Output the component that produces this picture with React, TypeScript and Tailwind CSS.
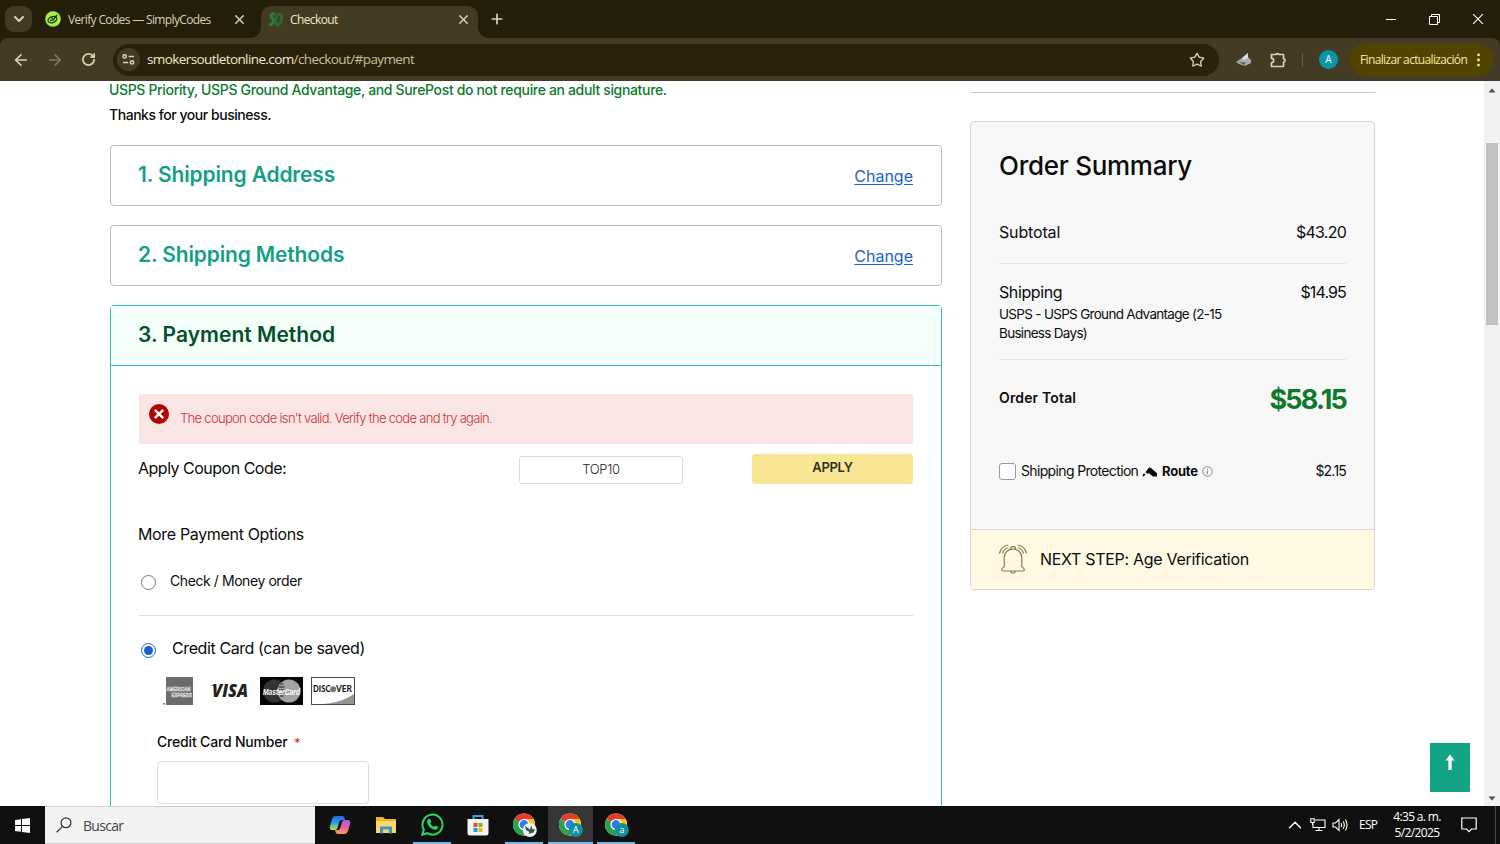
import type { ReactNode } from 'react';
import {
  ArrowLeft,
  ArrowRight,
  ChevronDown,
  ChevronUp,
  Plus,
  RotateCw,
  Star,
  X
} from 'lucide-react';

function ChromeLogo({ badge, badgeColor }: { badge?: string; badgeColor: string }) {
  return (
    <svg width="24" height="26" viewBox="0 0 24 26" className="ml-[2px] mt-[3px]">
      <circle cx="11" cy="11.5" r="11" fill="#fff" />
      <path d="M11 11.5 L1.47 6 A11 11 0 0 1 20.53 6 Z" fill="#e33b2e" />
      <path d="M11 11.5 L20.53 6 A11 11 0 0 1 11 22.5 Z" fill="#fbc116" />
      <path d="M11 11.5 L11 22.5 A11 11 0 0 1 1.47 6 Z" fill="#2da24c" />
      <path d="M11 6 H20.53 L16 14.5 L11 11.5 Z" fill="#fbc116" />
      <circle cx="11" cy="11.5" r="5.6" fill="#fff" />
      <circle cx="11" cy="11.5" r="4.4" fill="#2f7de9" />
      <circle cx="16.8" cy="17" r="7" fill={badgeColor} />
      {badge ? (
        <text x="16.8" y="20.4" textAnchor="middle" fontSize="9.5" fill="#fff" fontFamily="Open Sans, sans-serif">
          {badge}
        </text>
      ) : (
        <path d="M12 13 L17 16.5 L18.5 12.5 L19.5 16.5 L22 16 L20.5 19.5 L15.5 21 L16.5 19 L13 17 Z" fill="#2b5546" />
      )}
    </svg>
  );
}

function BrowserTabs() {
  return (
    <div className="flex h-[38px] items-start bg-[#241e0a] text-[#d9d0b0]">
      <div className="ml-[5px] mt-[6px] flex h-[26px] w-[27px] items-center justify-center rounded-[9px] bg-[#433b24]">
        <ChevronDown size={16} strokeWidth={3} />
      </div>

      <div className="ml-[13px] mt-[6px] flex h-[26px] w-[201px] items-center">
        <svg width="16" height="16" viewBox="0 0 16 16" className="shrink-0">
          <circle cx="8" cy="8" r="7.8" fill="#a5f04b" />
          <ellipse cx="7.4" cy="8.6" rx="4.6" ry="2.9" transform="rotate(-22 7.4 8.6)" fill="none" stroke="#1c3a12" strokeWidth="1.3" />
          <path d="M5 9.5 L8.3 9 L12 4 M8 7 L6.5 7.4" fill="none" stroke="#1c3a12" strokeWidth="1.3" />
        </svg>
        <span className="ml-[7px] w-[165px] shrink-0 whitespace-nowrap pt-px text-[12px] tracking-[-0.65px]">Verify Codes — SimplyCodes</span>
        <X size={15} strokeWidth={2.4} className="-ml-px shrink-0" />
      </div>

      <div className="relative ml-[15px] mt-[6px] flex h-[32px] w-[217px] items-start rounded-t-[10px] bg-[#433b24]">
        <span className="absolute -left-[10px] bottom-0 size-[10px] bg-[radial-gradient(circle_at_0_0,transparent_9.5px,#433b24_10px)]" />
        <span className="absolute -right-[10px] bottom-0 size-[10px] bg-[radial-gradient(circle_at_100%_0,transparent_9.5px,#433b24_10px)]" />
        <div className="flex h-[26px] items-center">
          <svg width="16" height="15" viewBox="0 0 16 15" className="ml-[7px]">
            <path d="M7 2.5 C4 1 2 3 4 6 C7 9 5 13 1 12.5" fill="none" stroke="#2f7a3c" strokeWidth="3.2" />
            <path d="M12 2 C8 1 6 13 9.5 13 C13.5 12.5 15 3 12 2 Z" fill="none" stroke="#2a6a35" strokeWidth="3" />
          </svg>
          <span className="ml-[6px] w-[166px] pt-px text-[12px] tracking-[-0.6px] text-[#f0e6c4]">Checkout</span>
          <X size={15} strokeWidth={2.4} />
        </div>
      </div>

      <Plus size={16} strokeWidth={2.6} className="ml-[11px] mt-[11px]" />

      <div className="ml-auto mr-[17px] flex h-[38px] items-center text-white">
        <span className="mr-[33px] h-px w-[10px] bg-white" />
        <svg width="11" height="11" viewBox="0 0 11 11" className="mr-[33px]" fill="none" stroke="currentColor">
          <path d="M0.5 2.5 H8.5 V10.5 H0.5 Z M2.5 2.5 V0.5 H10.5 V8.5 H8.5" />
        </svg>
        <svg width="10" height="10" viewBox="0 0 10 10" stroke="currentColor" strokeWidth="1.1">
          <path d="M0 0 L10 10 M10 0 L0 10" />
        </svg>
      </div>
    </div>
  );
}

function Toolbar() {
  return (
    <div className="h-[43px] bg-[#241e0a]">
      <div className="flex h-[43px] items-center rounded-t-[8px] bg-[#433b24] text-[#dcd2b0]">
        <ArrowLeft size={18} strokeWidth={2.3} className="ml-[12px]" />
        <ArrowRight size={18} strokeWidth={2.3} className="ml-[16px] text-[#857a59]" />
        <RotateCw size={15} strokeWidth={2.8} className="ml-[17px]" />
        <div className="ml-[17px] flex h-[32px] w-[1106px] items-center rounded-full bg-[#2b220b]">
          <span className="ml-[4px] flex size-[23px] items-center justify-center rounded-full bg-[#433b24]">
            <svg width="13" height="11" viewBox="0 0 13 11" fill="none" stroke="currentColor" strokeWidth="1.5">
              <circle cx="2.6" cy="2.4" r="1.7" />
              <path d="M6.5 2.4 H12 M1 8.4 H6.2" />
              <circle cx="10" cy="8.4" r="1.7" />
            </svg>
          </span>
          <span className="ml-[7px] whitespace-nowrap text-[13.5px] tracking-[-0.6px] text-[#f2e9ca]">
            smokersoutletonline.com<span className="text-[#c9bf9c]">/checkout/#payment</span>
          </span>
          <Star size={16} strokeWidth={2} className="ml-auto mr-[14px]" />
        </div>
        <svg width="16" height="14" viewBox="0 0 16 14" className="ml-[17px]">
          <path d="M0 9 L6 5 L12 0 L12 4 L15 7 L15 10 L9 13 L3 11 Z" fill="#a9a8ad" />
          <path d="M6 5 L12 0 L12 5 L8 7 Z" fill="#d9d9de" />
          <path d="M3 9 L10 9.5 L8 12 Z" fill="#5f5e64" />
        </svg>
        <svg width="17" height="16" viewBox="0 0 17 16" className="ml-[18px]" fill="none" stroke="currentColor" strokeWidth="1.7" strokeLinejoin="round">
          <path d="M1.5 2.5 H6 A1.7 1.7 0 0 1 9 2.5 H13.5 V6.8 A1.6 1.6 0 0 1 13.5 10 V14.5 H1.5 V10.8 A2.2 2.2 0 0 0 1.5 6.4 Z" />
        </svg>
        <span className="ml-[15px] h-[14px] w-px bg-[#6b6142]" />
        <span className="ml-[16px] flex size-[19px] items-center justify-center rounded-full bg-[#0997a7] text-[10px] text-white">A</span>
        <div className="ml-[11px] flex h-[32px] w-[145px] items-center rounded-full bg-[#534300] text-[12px] text-[#f7e6a5]">
          <span className="ml-[11px] w-[117px] whitespace-nowrap tracking-[-0.65px]">Finalizar actualización</span>
          <svg width="3" height="14" viewBox="0 0 3 14" fill="currentColor">
            <circle cx="1.5" cy="1.9" r="1.4" />
            <circle cx="1.5" cy="7" r="1.4" />
            <circle cx="1.5" cy="12.1" r="1.4" />
          </svg>
        </div>
      </div>
    </div>
  );
}

function Step({ title }: { title: string }) {
  return (
    <div className="mb-[19px] flex h-[61px] items-center justify-between rounded-[4px] border border-[#bcbcbc] pl-[27px] pr-[28px]">
      <h2 className="pb-px text-[21px] font-semibold tracking-[-0.15px] text-[#14a085]">{title}</h2>
      <a href="#" className="text-[16px] text-[#1b66c0] underline underline-offset-2">Change</a>
    </div>
  );
}

function Radio({ checked }: { checked?: boolean }) {
  return checked ? (
    <span className="flex size-[15px] items-center justify-center rounded-full border border-[#1565d8]">
      <span className="size-[9px] rounded-full bg-[#1262cf]" />
    </span>
  ) : (
    <span className="size-[15px] rounded-full border border-[#767676]" />
  );
}

function CardLogos() {
  return (
    <div className="mt-[17px] flex h-[28px] items-center pl-[23px]">
      <svg width="32" height="28" viewBox="0 0 32 28">
        <rect x="4" width="27" height="28" fill="#6b6b6b" />
        <rect x="1" y="26" width="2" height="1.5" fill="#888" />
        <g fill="#7d7d7d" stroke="#e4e4e4" strokeWidth="0.5" fontFamily="Liberation Sans, sans-serif" fontSize="6" fontWeight="700">
          <text transform="translate(4.5 14.4) scale(0.74 1)">AMERICAN</text>
          <text transform="translate(9.5 20.2) scale(0.72 1)">EXPRESS</text>
        </g>
      </svg>
      <svg width="40" height="28" viewBox="0 0 40 28" className="ml-[16px]">
        <path d="M0.5 8 H5 L7.5 14 L5 10 Z" fill="#888" />
        <text x="2" y="20.3" textLength="36" lengthAdjust="spacingAndGlyphs" fontFamily="Open Sans, sans-serif" fontStyle="italic" fontWeight="800" fontSize="17" fill="#222">VISA</text>
      </svg>
      <svg width="43" height="28" viewBox="0 0 43 28" className="ml-[10px]">
        <rect width="43" height="28" fill="#050505" />
        <circle cx="14.5" cy="14" r="11.5" fill="#343434" />
        <circle cx="29" cy="14" r="11.5" fill="#a3a3a3" />
        <path d="M20 7 H23.5 M19 10 H24.5 M19 13 H24.5 M19 16 H24.5 M20 19 H23.5" stroke="#4a4a4a" strokeWidth="1.4" />
        <text transform="translate(3 18) scale(0.75 1)" fontFamily="Liberation Sans, sans-serif" fontStyle="italic" fontWeight="700" fontSize="9" fill="#fff">MasterCard</text>
      </svg>
      <svg width="44" height="28" viewBox="0 0 44 28" className="ml-[8px]">
        <rect x="0.5" y="0.5" width="43" height="27" fill="#fff" stroke="#4a4a4a" />
        <path d="M12 27 C26 26 36 22 43 17 V27 Z" fill="#949494" />
        <g fontFamily="Lato, sans-serif" fontWeight="900" fontSize="8.4" fill="#1d1d1d">
          <text x="2" y="15.3" textLength="17.5" lengthAdjust="spacingAndGlyphs">DISC</text>
          <text x="25" y="15.3" textLength="16" lengthAdjust="spacingAndGlyphs">VER</text>
        </g>
        <circle cx="22.2" cy="12.3" r="3" fill="#777" />
      </svg>
    </div>
  );
}

function CheckoutSteps() {
  return (
    <div className="w-[832px] shrink-0">
      <div className="-ml-px -mt-[4px] mb-[18px] text-[14px] font-medium leading-[25px]">
        <p className="whitespace-nowrap tracking-[-0.34px] text-[#0b7a2c]">
          USPS Priority, USPS Ground Advantage, and SurePost do not require an adult signature.
        </p>
        <p className="whitespace-nowrap tracking-[-0.46px]">Thanks for your business.</p>
      </div>

      <Step title="1. Shipping Address" />
      <Step title="2. Shipping Methods" />

      <div className="h-[560px] rounded-t-[4px] border border-[#2fc4ab]">
        <div className="flex h-[60px] items-center border-b border-[#2fc4ab] bg-[#f4fffa] pl-[27px] pb-[2px]">
          <h2 className="text-[21px] font-semibold tracking-[0.02px] text-[#055029]">3. Payment Method</h2>
        </div>

        <div className="px-[28px] pt-[28px]">
          <div className="flex h-[50px] bg-[#f9e5e4]">
            <svg width="20" height="20" viewBox="0 0 20 20" className="ml-[10px] mt-[10px]">
              <circle cx="10" cy="10" r="10" fill="#b30000" />
              <path d="M5.8 5.8 L14.2 14.2 M14.2 5.8 L5.8 14.2" stroke="#fff" strokeWidth="2.4" />
            </svg>
            <p className="ml-[11px] text-[13px] font-light leading-[49px] tracking-[-0.69px] text-[#cf2f38]">
              The coupon code isn't valid. Verify the code and try again.
            </p>
          </div>

          <div className="flex h-[40px] items-end">
            <span className="-ml-px w-[381px] pb-[4px] text-[16px] leading-[24px] tracking-[-0.5px]">Apply Coupon Code:</span>
            <span className="flex h-[28px] w-[164px] items-center justify-center rounded-[3px] border border-[#dcdcdc] text-[13px] font-light tracking-[-0.3px] text-[#222]">TOP10</span>
            <button className="ml-auto h-[30px] w-[161px] rounded-[3px] bg-[#f8e694] pb-[2px] text-[13px] font-semibold tracking-[-0.3px] text-[#2b3226]">APPLY</button>
          </div>

          <h3 className="-ml-px mt-[38px] text-[16px] leading-[24px] tracking-[-0.34px]">More Payment Options</h3>

          <div className="mt-[25px] flex h-[20px] items-center pl-[2px]">
            <span className="flex pt-[2px]"><Radio /></span>
            <span className="ml-[14px] text-[14px] leading-[20px] tracking-[-0.42px]">Check / Money order</span>
          </div>
          <div className="mt-[24px] h-px bg-[#dfdfdf]" />

          <div className="mt-[20px] flex h-[24px] items-center pl-[2px]">
            <span className="flex pt-[4px]"><Radio checked /></span>
            <span className="ml-[16px] text-[16px] tracking-[-0.4px]">Credit Card (can be saved)</span>
          </div>
          <CardLogos />

          <div className="pl-[18px] pt-[27px]">
            <label className="block text-[14px] font-medium leading-[20px] tracking-[-0.18px]">
              Credit Card Number <span className="ml-[3px] text-[12px] text-[#e02b27]">*</span>
            </label>
            <div className="mt-[8px] h-[43px] w-[212px] rounded-[4px] border border-[#dcdcdc]" />
          </div>
        </div>
      </div>
    </div>
  );
}

function OrderSummary() {
  return (
    <div className="ml-[28px] w-[405px] shrink-0">
      <div className="mt-[11px] h-px bg-[#cdc9c4]" />
      <div className="mt-[28px] rounded-[4px] border border-[#d6d6d6] bg-[#f7f7f7]">
        <div className="h-[407px] px-[28px]">
          <h2 className="pt-[27px] text-[26px] font-medium leading-[34px] tracking-[-0.28px]">Order Summary</h2>
          <div className="mt-[37px] flex justify-between text-[16px] leading-[24px]">
            <span className="tracking-[-0.15px]">Subtotal</span>
            <span className="tracking-[-0.75px]">$43.20</span>
          </div>
          <div className="mt-[19px] h-px bg-[#e6e3d3]" />
          <div className="mt-[16px] flex justify-between text-[16px] leading-[24px]">
            <span className="tracking-[-0.4px]">Shipping</span>
            <span className="tracking-[-0.85px]">$14.95</span>
          </div>
          <p className="mt-[1px] whitespace-nowrap text-[13.5px] leading-[19px] tracking-[-0.7px]">
            USPS - USPS Ground Advantage (2-15
            <br />
            Business Days)
          </p>
          <div className="mt-[16px] h-px bg-[#e6e3d3]" />
          <div className="mt-[20px] flex h-[40px] items-center justify-between">
            <span className="pb-[6px] text-[14px] font-semibold tracking-[0.15px]">Order Total</span>
            <span className="text-[27px] font-bold tracking-[-1.8px] text-[#0b7a2c]">$58.15</span>
          </div>
          <div className="mt-[40px] flex h-[22px] items-center text-[14px]">
            <span className="mt-[1px] size-[17px] rounded-[3px] border border-[#999] bg-white" />
            <span className="ml-[5px] w-[121px] whitespace-nowrap pb-px tracking-[-0.65px]">Shipping Protection</span>
            <svg width="16" height="10" viewBox="0 0 16 10" className="mt-[1px]">
              <path d="M0.5 9.8 L1.2 6.8 L3 6.8 L3.4 8 Z M3.5 5.2 L6.5 1 Q7.5 0 9 1 L15 6.2 V9.6 H11 L6.6 6 L5.8 7 Z" fill="#0a0a0a" />
            </svg>
            <span className="ml-[4px] mt-[2px] w-[40px] text-[13px] font-bold tracking-[-0.2px]">Route</span>
            <svg width="11" height="11" viewBox="0 0 11 11" className="mt-[1px]" fill="none" stroke="#888">
              <circle cx="5.5" cy="5.5" r="4.8" />
              <path d="M5.5 2.6 V3.7 M5.5 4.7 V8.3" />
            </svg>
            <span className="ml-auto pb-px tracking-[-0.8px]">$2.15</span>
          </div>
        </div>
        <div className="flex h-[60px] items-center rounded-b-[3px] border-t border-[#d6d6d6] bg-[#fff8e2] pb-[2px] pl-[28px]">
          <svg width="28" height="30" viewBox="0 0 28 30" fill="none" stroke="#8a7c50" strokeWidth="1.2">
            <path d="M5.2 22.5 V13.5 C5.2 8.5 9 5.2 14 5.2 C19 5.2 22.8 8.5 22.8 13.5 V22.5 C24 23.5 25.3 24.3 25.3 25.8 C25.3 26.6 24.8 27 24 27 H4 C3.2 27 2.7 26.6 2.7 25.8 C2.7 24.3 4 23.5 5.2 22.5 Z" />
            <path d="M11.6 5.4 V4.6 C11.6 1.6 16.4 1.6 16.4 4.6 V5.4 M11.8 27 C12.2 30 15.8 30 16.2 27" />
            <path d="M0.5 9.5 C1.5 4.5 4.5 1.8 9.3 1 M3.5 9.5 C4.2 6.6 6 4.7 8.8 3.8 M27.5 9.5 C26.5 4.5 23.5 1.8 18.7 1 M24.5 9.5 C23.8 6.6 22 4.7 19.2 3.8" />
          </svg>
          <span className="ml-[13px] text-[16px] tracking-[-0.3px]">NEXT STEP: Age Verification</span>
        </div>
      </div>
    </div>
  );
}

function Scrollbar() {
  return (
    <div className="ml-auto flex w-[16px] shrink-0 flex-col items-center bg-[#f1f1f1]">
      <svg width="8" height="5" viewBox="0 0 8 5" className="mt-[7px]">
        <path d="M0.5 4.5 L4 0.5 L7.5 4.5 Z" fill="#505050" />
      </svg>
      <div className="mt-[50px] h-[182px] w-[12px] bg-[#c1c1c1]" />
      <svg width="8" height="5" viewBox="0 0 8 5" className="mb-[5px] mt-auto">
        <path d="M0.5 0.5 L4 4.5 L7.5 0.5 Z" fill="#505050" />
      </svg>
    </div>
  );
}

function TaskItem({ children, open, active }: { children: ReactNode; open?: boolean; active?: boolean }) {
  return (
    <div className="flex h-[38px] w-[46px] flex-col items-center">
      <div className={active ? 'flex h-[36px] w-[45px] items-center justify-center bg-[#363636] pt-px' : 'flex h-[36px] w-[45px] items-center justify-center pt-px'}>
        {children}
      </div>
      {open && <div className={active ? 'h-[2px] w-[45px] bg-[#76b9ed]' : 'h-[2px] w-[38px] bg-[#76b9ed]'} />}
    </div>
  );
}

function Taskbar() {
  return (
    <div className="flex h-[38px] bg-[#101010] text-white">
      <div className="flex w-[45px] items-center justify-center">
        <svg width="15" height="15" viewBox="0 0 15 15" fill="#fff">
          <path d="M0 2 L6 1.2 V7 H0 Z M7 1.1 L15 0 V7 H7 Z M0 8 H6 V13.8 L0 13 Z M7 8 H15 V15 L7 13.9 Z" />
        </svg>
      </div>
      <div className="flex h-[38px] w-[270px] items-center border-y border-[#cfcfcf] bg-[#f2f2f2] text-[#444]">
        <svg width="16" height="16" viewBox="0 0 16 16" className="ml-[11px]" fill="none" stroke="#333" strokeWidth="1.3">
          <circle cx="10" cy="5.8" r="4.9" />
          <path d="M6.6 9.4 L0.6 15.2" />
        </svg>
        <span className="ml-[11px] text-[14px] tracking-[-0.7px]">Buscar</span>
      </div>

      <div className="ml-[2px] flex">
        <TaskItem>
          <svg width="22" height="20" viewBox="0 0 22 20">
            <defs>
              <linearGradient id="cpA" x1="0" y1="0" x2="0" y2="1">
                <stop offset="0" stopColor="#2a63e8" />
                <stop offset="0.5" stopColor="#22a6d8" />
                <stop offset="1" stopColor="#c9dc45" />
              </linearGradient>
              <linearGradient id="cpB" x1="0" y1="0" x2="0" y2="1">
                <stop offset="0" stopColor="#a75ce8" />
                <stop offset="0.5" stopColor="#e85a9c" />
                <stop offset="1" stopColor="#f9a35a" />
              </linearGradient>
            </defs>
            <path d="M6 1 H13 Q15 1 15.5 3 L16 5 H12.5 Q11 5 10.5 6.5 L8.5 13 Q7.8 15 6 15 H3 Q0 15 1 11 L3 4 Q4 1 6 1 Z" fill="url(#cpA)" />
            <path d="M16 19 H9 Q7 19 6.5 17 L6 15 H8.5 Q10.5 15 11 13.5 L13 7 Q13.7 5 15.5 5 H19 Q22 5 21 9 L19 16 Q18 19 16 19 Z" fill="url(#cpB)" />
          </svg>
        </TaskItem>
        <TaskItem>
          <svg width="20" height="18" viewBox="0 0 20 18">
            <path d="M0 1 H7 L9 3 H20 V16 H0 Z" fill="#f0b429" />
            <path d="M0 5 H20 V17 H0 Z" fill="#fbd869" />
            <path d="M4 17.5 V10.5 H16 V17.5 H13 V13.5 H7 V17.5 Z" fill="#3f94d2" />
          </svg>
        </TaskItem>
        <TaskItem open>
          <svg width="23" height="23" viewBox="0 0 23 23">
            <path d="M1.3 21.7 L2.8 16.5 A10 10 0 1 1 6.4 20.2 Z" fill="#101010" stroke="#2bd366" strokeWidth="2" />
            <path d="M7.6 6 L9.2 6 L10.3 8.8 L9.2 10.4 Q10.4 12.8 13 13.8 L14.4 12.4 L17 13.7 Q17 16.6 14 16.8 Q7.5 15.8 6 9 Q6 7 7.6 6 Z" fill="#2bd366" />
          </svg>
        </TaskItem>
        <TaskItem>
          <svg width="22" height="22" viewBox="0 0 22 22">
            <path d="M6.5 6 V2 H15.5 V6" fill="none" stroke="#2ba3e8" strokeWidth="2" />
            <path d="M0.5 5 H21.5 V19 Q21.5 21.5 19 21.5 H3 Q0.5 21.5 0.5 19 Z" fill="#f3f3f3" />
            <rect x="6.5" y="9" width="4" height="4" fill="#e8502a" />
            <rect x="11.5" y="9" width="4" height="4" fill="#7fb51c" />
            <rect x="6.5" y="14" width="4" height="4" fill="#1b9de2" />
            <rect x="11.5" y="14" width="4" height="4" fill="#f8b710" />
          </svg>
        </TaskItem>
        <TaskItem open><ChromeLogo badgeColor="#eef1ef" /></TaskItem>
        <TaskItem open active><ChromeLogo badge="A" badgeColor="#0f8f9f" /></TaskItem>
        <TaskItem open><ChromeLogo badge="a" badgeColor="#0f8f9f" /></TaskItem>
      </div>

      <div className="ml-auto flex items-center">
        <ChevronUp size={22} strokeWidth={1.6} />
        <svg width="16" height="14" viewBox="0 0 16 14" className="ml-[4px]" fill="none" stroke="#fff" strokeWidth="1.1">
          <path d="M5 2 H15 V9.5 H3 V5.5 M9 9.5 V12.5 M5.5 12.5 H12.5 M0.8 0.8 H4.2 V4.5 H0.8 Z M2.5 4.5 V7" />
        </svg>
        <svg width="17" height="14" viewBox="0 0 17 14" className="ml-[6px]" fill="none" stroke="#fff" strokeWidth="1.1">
          <path d="M1 5 H3.5 L7 1.5 V12.5 L3.5 9 H1 Z M9 5 Q10.2 7 9 9 M11.2 3.2 Q13.4 7 11.2 10.8 M13.4 1.5 Q16.6 7 13.4 12.5" />
        </svg>
        <span className="ml-[10px] w-[20px] text-[12px] tracking-[-0.7px]">ESP</span>
        <div className="ml-[9px] w-[58px] text-center text-[12px] leading-[16px] tracking-[-0.65px]">
          <div>4:35 a. m.</div>
          <div>5/2/2025</div>
        </div>
        <svg width="16" height="16" viewBox="0 0 16 16" className="ml-[15px] mr-[18px]" fill="none" stroke="#fff" strokeWidth="1.2">
          <path d="M0.8 1 H15.2 V12 H10.5 L8 14.6 L5.5 12 H0.8 Z" />
        </svg>
        <span className="mr-[4px] h-[38px] w-px bg-[#4a4a4a]" />
      </div>
    </div>
  );
}

export default function App() {
  return (
    <div className="flex h-[844px] w-[1500px] flex-col overflow-hidden bg-white font-['Open_Sans',sans-serif]">
      <BrowserTabs />
      <Toolbar />

      <div className="relative flex h-[725px] overflow-hidden bg-white pl-[110px] font-['Inter',sans-serif] text-[#0c0c0c]">
        <CheckoutSteps />
        <OrderSummary />
        <Scrollbar />

        {/* Back to top */}
        <button className="absolute bottom-[14px] right-[30px] flex h-[49px] w-[40px] justify-center bg-[#12a484] pt-[11px]">
          <svg width="10" height="17" viewBox="0 0 10 17">
            <path d="M5 0.5 L9.5 6.5 H6.6 V16 H3.4 V6.5 H0.5 Z" fill="#fff" />
          </svg>
        </button>
      </div>

      <Taskbar />
    </div>
  );
}
